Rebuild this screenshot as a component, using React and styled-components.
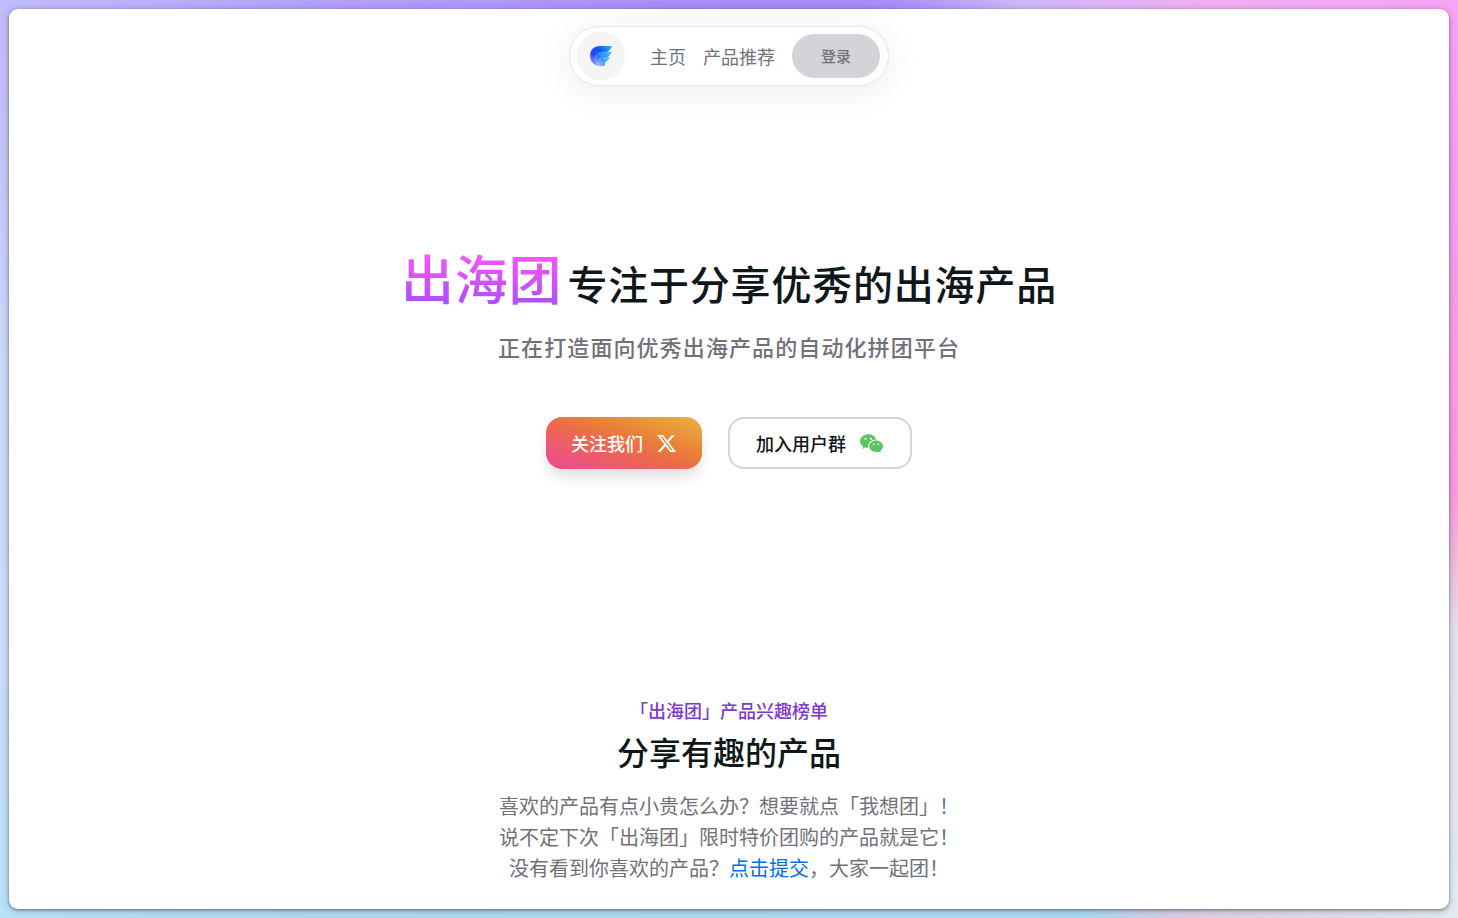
import React from "react";
import styled, { createGlobalStyle } from "styled-components";
import { FaXTwitter } from "react-icons/fa6";
import { RiWechatFill } from "react-icons/ri";

const GlobalStyle = createGlobalStyle`
  *, *::before, *::after { box-sizing: border-box; }
  body {
    margin: 0;
    font-family: "Noto Sans CJK SC", sans-serif;
    color: #0f171a;
  }
  h1, h2, p { margin: 0; }
  a { text-decoration: none; }
`;

const Page = styled.div`
  display: flex;
  min-height: 100vh;
  padding: 9px;
  background:
    linear-gradient(90deg, #c0bcfc 0%, #b3a2f9 20%, #a88bf7 50%, #a88bf8 61%, #cdb8f8 70%, #efaef4 82%, #f6a4f6 100%) top / 100% 20px no-repeat,
    linear-gradient(90deg, #b8e2fa 0%, #b2dbf4 20%, #abdbf4 74%, #dccfe6 81%, #e2eaf3 100%) bottom / 100% 20px no-repeat,
    linear-gradient(180deg, #c1b9fc 0%, #c6c4fb 16%, #cad9fb 40%, #ccdcfa 70%, #b8e2fa 100%) left / 20px 100% no-repeat,
    linear-gradient(180deg, #f6a4f8 0%, #f79df0 25%, #fb9ade 54%, #eebfe0 62%, #e2e2ee 69%, #e2eaf3 100%) right / 20px 100% no-repeat;
`;

const Panel = styled.div`
  flex: 1;
  min-width: 0;
  display: flex;
  flex-direction: column;
  align-items: center;
  padding: 17px 24px 16px;
  border-radius: 9px;
  background: #fff;
  box-shadow: 0 1px 3px rgba(0, 0, 0, 0.4), 0 2px 8px rgba(0, 0, 0, 0.2);
`;

const Header = styled.header`
  display: flex;
  align-items: center;
  height: 60px;
  padding: 0 8px;
  border: 1px solid #e6e6e8;
  border-radius: 30px;
  background: #fff;
  box-shadow: 0 5px 36px rgba(0, 0, 0, 0.08);
`;

const LogoLink = styled.a`
  display: flex;
  align-items: center;
  justify-content: center;
  width: 46px;
  height: 46px;
  border-radius: 50%;
  background: #f5f5f6;
  box-shadow: 0 0 2px rgba(0, 0, 0, 0.14);
`;

const Nav = styled.nav`
  display: flex;
  gap: 17px;
  margin: 0 17px 0 26px;
`;

const NavLink = styled.a`
  font-size: 18px;
  line-height: 28px;
  color: #71717a;
`;

const LoginButton = styled.button`
  width: 88px;
  height: 44px;
  border: 0;
  border-radius: 22px;
  background: #d4d4d8;
  color: #71717a;
  font: 500 15px/22px "Noto Sans CJK SC", sans-serif;
`;

const Hero = styled.section`
  display: flex;
  flex-direction: column;
  align-items: center;
  padding-top: 152px;
  text-align: center;
`;

const Title = styled.h1`
  font-size: 40px;
  font-weight: 500;
  line-height: 78px;
  letter-spacing: 0.02em;
`;

const Brand = styled.span`
  margin-right: 5px;
  font-size: 53px;
  background: linear-gradient(180deg, #f857f8 20%, #b44ffc 80%);
  background-clip: text;
  -webkit-background-clip: text;
  color: transparent;
`;

const Subtitle = styled.p`
  margin-top: 8px;
  font-size: 22px;
  font-weight: 500;
  line-height: 32px;
  letter-spacing: 0.05em;
  color: #71717a;
`;

const Actions = styled.div`
  display: flex;
  gap: 26px;
  margin-top: 55px;
`;

const ActionLink = styled.a`
  display: flex;
  align-items: center;
  justify-content: center;
  gap: 13px;
  width: ${(p) => (p.$primary ? "156px" : "184px")};
  height: 52px;
  border: ${(p) => (p.$primary ? "0" : "2px solid #d4d4d8")};
  border-radius: 16px;
  background: ${(p) =>
    p.$primary
      ? "linear-gradient(to top right, #ec4899 0%, #eb6a4b 45%, #ea8038 62%, #e8b340 100%)"
      : "#fff"};
  box-shadow: ${(p) => (p.$primary ? "0 10px 16px -3px rgba(0, 0, 0, 0.14)" : "none")};
  color: ${(p) => (p.$primary ? "#fff" : "#0f171a")};
  font-size: 18px;
  font-weight: 500;
  line-height: 28px;
`;

const Products = styled.section`
  display: flex;
  flex-direction: column;
  align-items: center;
  margin-top: 227px;
  text-align: center;
`;

const Kicker = styled.p`
  font-size: 18px;
  font-weight: 500;
  line-height: 28px;
  color: #7e3acb;
`;

const SectionTitle = styled.h2`
  margin-top: 7px;
  font-size: 32px;
  font-weight: 500;
  line-height: 40px;
`;

const Description = styled.p`
  margin-top: 19px;
  font-size: 20px;
  line-height: 31px;
  color: #71717a;
`;

const SubmitLink = styled.a`
  color: #006fee;
`;

function WingLogo() {
  return (
    <svg width="22" height="20" viewBox="0 0 66 60" aria-hidden="true">
      <defs>
        <linearGradient id="wing-back" x1="0" y1="0.9" x2="1" y2="0">
          <stop offset="0" stopColor="#b9a4fa" />
          <stop offset="0.3" stopColor="#2f45f2" />
          <stop offset="0.6" stopColor="#0a5af5" />
          <stop offset="1" stopColor="#35b2ff" />
        </linearGradient>
        <linearGradient id="wing-mid" x1="0" y1="1" x2="1" y2="0">
          <stop offset="0" stopColor="#b8a6fa" />
          <stop offset="0.45" stopColor="#2b7bfa" />
          <stop offset="1" stopColor="#48c6ff" />
        </linearGradient>
        <linearGradient id="wing-front" x1="0" y1="0.8" x2="1" y2="0.1">
          <stop offset="0" stopColor="#c0b2fb" />
          <stop offset="0.5" stopColor="#419dfb" />
          <stop offset="1" stopColor="#4cc9fb" />
        </linearGradient>
      </defs>
      <path d="M66 0H30C11 0 0 13 0 30c0 16 10 26 24 29L22 34C30 24 38 19 48 19 57 15 63 8 66 0Z" fill="url(#wing-back)" />
      <path d="M65 17H36C22 18 12 28 11 42c2 9 8 15 17 17l2-13c4-8 11-11 18-11C57 31 62 25 65 17Z" fill="url(#wing-mid)" />
      <path d="M60 33H42C30 34 20 42 18 57c8 3 17 3 26 3l2-12c7-3 11-8 14-15Z" fill="url(#wing-front)" />
    </svg>
  );
}

export default function App() {
  return (
    <>
      <GlobalStyle />
      <Page>
        <Panel>
          <Header>
            <LogoLink href="#" aria-label="出海团">
              <WingLogo />
            </LogoLink>
            <Nav>
              <NavLink href="#">主页</NavLink>
              <NavLink href="#products">产品推荐</NavLink>
            </Nav>
            <LoginButton type="button">登录</LoginButton>
          </Header>
          <main>
            <Hero>
              <Title>
                <Brand>出海团</Brand>
                专注于分享优秀的出海产品
              </Title>
              <Subtitle>正在打造面向优秀出海产品的自动化拼团平台</Subtitle>
              <Actions>
                <ActionLink href="#" $primary>
                  关注我们
                  <FaXTwitter size={21} />
                </ActionLink>
                <ActionLink href="#">
                  加入用户群
                  <RiWechatFill size={25} color="#5dc466" />
                </ActionLink>
              </Actions>
            </Hero>
            <Products id="products">
              <Kicker>「出海团」产品兴趣榜单</Kicker>
              <SectionTitle>分享有趣的产品</SectionTitle>
              <Description>
                喜欢的产品有点小贵怎么办？想要就点「我想团」！
                <br />
                说不定下次「出海团」限时特价团购的产品就是它！
                <br />
                没有看到你喜欢的产品？<SubmitLink href="#">点击提交</SubmitLink>，大家一起团！
              </Description>
            </Products>
          </main>
        </Panel>
      </Page>
    </>
  );
}
